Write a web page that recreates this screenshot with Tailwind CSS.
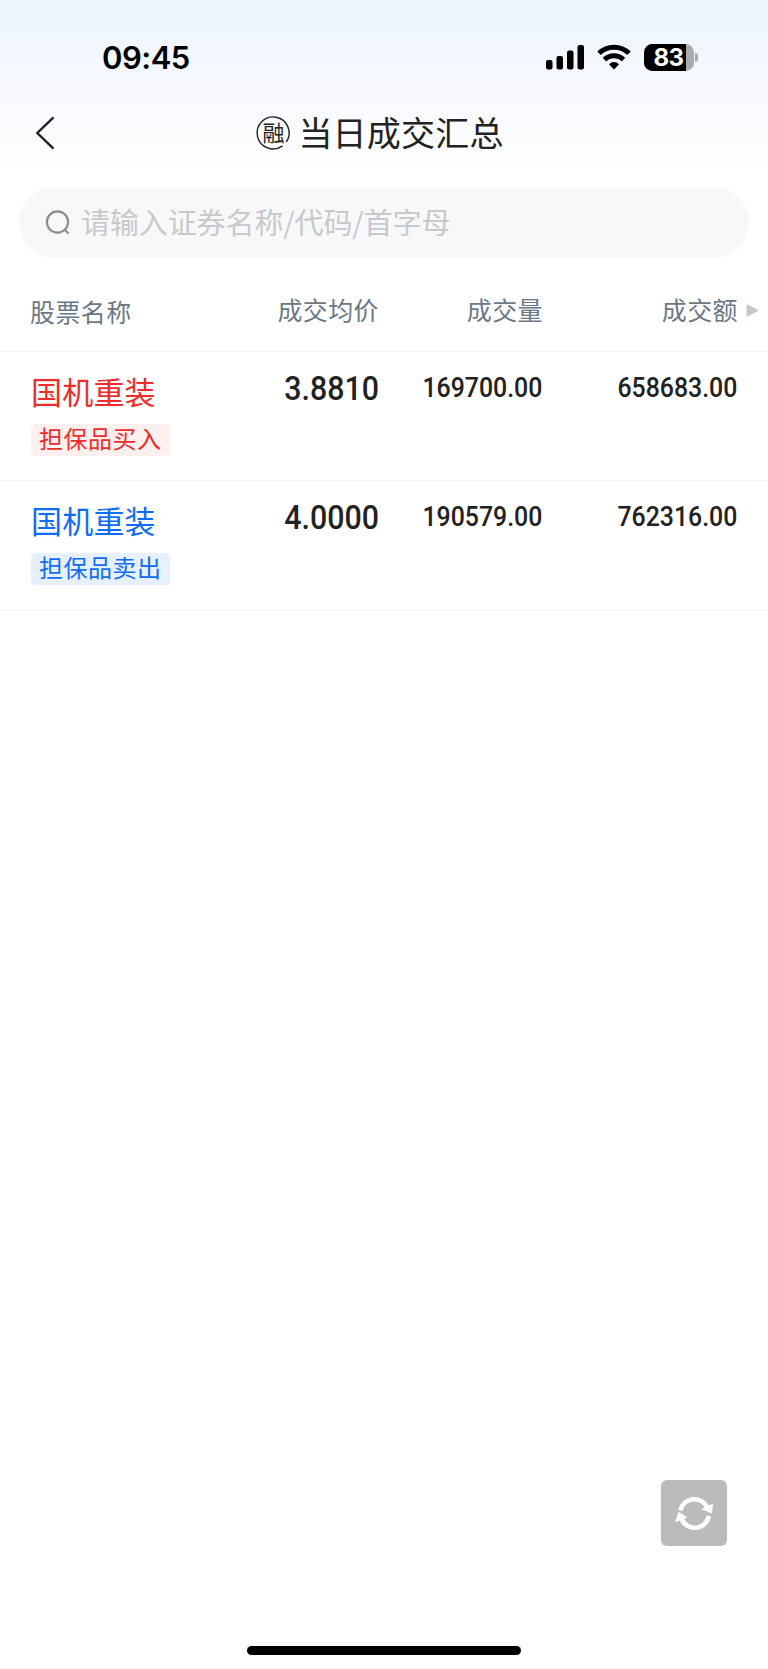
<!DOCTYPE html>
<html lang="zh-CN">
<head>
    <meta charset="UTF-8">
    <meta name="viewport" content="width=device-width, initial-scale=1.0">
    <title>当日成交汇总</title>
    <script src="https://cdn.jsdelivr.net/npm/@tailwindcss/browser@4"></script>
</head>
<body class="bg-white font-['Noto_Sans_CJK_SC',sans-serif] text-[#222]">
    <div class="relative w-[768px] h-[1669px] flex flex-col overflow-hidden">
        <div class="bg-linear-to-b from-[#ecf5fe] via-[#f5f8fe] via-40% to-white h-[175px] shrink-0">
            <!-- Status bar -->
            <div class="h-[94px] pt-[20px] pl-[102px] pr-[70px] flex items-center justify-between">
                <span class="font-['Inter',sans-serif] font-semibold text-[31px] leading-none tracking-[-0.5px] text-black">09:45</span>
                <div class="flex items-center">
                    <svg class="w-[38px] h-[26px] mr-[13px]" viewBox="0 0 38 26" fill="#000">
                        <rect x="0" y="16" width="6.5" height="9.5" rx="2"/>
                        <rect x="10.5" y="12" width="6.5" height="13.5" rx="2"/>
                        <rect x="21" y="6.5" width="6.5" height="19" rx="2"/>
                        <rect x="31.5" y="1" width="6.5" height="24.5" rx="2"/>
                    </svg>
                    <svg class="w-[34px] h-[26px] mr-[13px]" viewBox="0 0 34 26" fill="none" stroke="#000" stroke-width="5">
                        <path d="M2 9.3a21.5 21.5 0 0 1 30 0"/>
                        <path d="M7.5 15.6a13.6 13.6 0 0 1 19 0"/>
                        <path d="M17 25.4l-5-5.2a7 7 0 0 1 10 0z" fill="#000" stroke="none"/>
                    </svg>
                    <div class="relative flex w-[49.5px] h-[27px] rounded-[8.5px] overflow-hidden bg-[#a9abb0]">
                        <div class="w-[41.5px] bg-black"></div>
                        <span class="absolute left-[9.5px] top-0 font-['Inter',sans-serif] font-bold text-[24px] leading-[27px] tracking-[-0.6px] text-white">83</span>
                    </div>
                    <div class="w-[3px] h-[9px] ml-[1.5px] rounded-r-full bg-[#a9abb0]"></div>
                </div>
            </div>
            <!-- Title bar -->
            <div class="relative h-[78px] flex items-center justify-center">
                <svg class="absolute left-[35px] top-[22px] w-[20px] h-[34px]" viewBox="0 0 20 34" fill="none" stroke="#222" stroke-width="2.4">
                    <path d="M18.5 1.3L2.3 17l16.2 15.7"/>
                </svg>
                <svg class="w-[34px] h-[34px] mr-[8px] overflow-visible" viewBox="0 0 34 34">
                    <path d="M30.3 26A16 16 0 1 0 26.5 29.9" fill="none" stroke="#222" stroke-width="1.4"/>
                    <text x="17.5" y="25" text-anchor="middle" font-size="22" font-family="Noto Sans CJK SC" fill="#222">融</text>
                </svg>
                <h1 class="text-[34px] leading-[44px] tracking-[0.2px] mr-[8px] pb-[2px]">当日成交汇总</h1>
            </div>
        </div>

        <!-- Search -->
        <div class="mt-[12px] mx-[19px] h-[71px] shrink-0 rounded-full bg-[#f7f8fa] flex items-center pl-[26px]">
            <svg class="w-[26px] h-[26px] mr-[10px]" viewBox="0 0 26 26" fill="none" stroke="#8c8c8c" stroke-width="2.2">
                <circle cx="12.5" cy="12" r="10.6"/>
                <path d="M19.5 19.5l4 4"/>
            </svg>
            <span class="text-[29px] leading-[40px] tracking-[-0.1px] pb-[4px] text-[#c8c9cb]">请输入证券名称/代码/首字母</span>
        </div>

        <!-- Table header -->
        <div class="relative h-[94px] shrink-0 border-b border-[#f6f6f8] flex pt-[32px] text-[25px] leading-[38px] tracking-[0.4px] text-[#6b7885]">
            <div class="w-[200px] pl-[30px] pt-[2px]">股票名称</div>
            <div class="w-[179px] text-right">成交均价</div>
            <div class="w-[164px] text-right">成交量</div>
            <div class="w-[195px] text-right">成交额</div>
            <svg class="absolute left-[746px] top-[46px] w-[13px] h-[13px]" viewBox="0 0 13 13" fill="#c8c8c8">
                <path d="M1.5 .4l10.2 5.3q1 .8 0 1.6L1.5 12.6Q.5 12.6 .5 11.6V1.4Q.5.4 1.5.4z"/>
            </svg>
        </div>

        <!-- Rows -->
        <div class="h-[129px] shrink-0 border-b border-[#f6f6f8] flex pt-[18px]">
            <div class="w-[200px] pl-[31px] text-[#ee2c2c]">
                <div class="text-[31px] leading-[42px] tracking-[0.2px]">国机重装</div>
                <div class="mt-[12px] w-[139px] h-[32px] rounded-[4px] bg-[#fff0f0] pl-[8px] text-[24px] leading-[27px] tracking-[0.5px]">担保品买入</div>
            </div>
            <div class="w-[179px] pt-[1px] text-right font-['Roboto',sans-serif] font-medium text-[33px] leading-[36px]"><span class="inline-block origin-right scale-x-92">3.8810</span></div>
            <div class="w-[163px] pt-[1px] text-right font-['Roboto',sans-serif] font-medium text-[27px] leading-[34px]"><span class="inline-block origin-right scale-x-92">169700.00</span></div>
            <div class="w-[195px] pt-[1px] text-right font-['Roboto',sans-serif] font-medium text-[27px] leading-[34px]"><span class="inline-block origin-right scale-x-92">658683.00</span></div>
        </div>
        <div class="h-[130px] shrink-0 border-b border-[#f6f6f8] flex pt-[18px]">
            <div class="w-[200px] pl-[31px] text-[#0f6cf5]">
                <div class="text-[31px] leading-[42px] tracking-[0.2px]">国机重装</div>
                <div class="mt-[12px] w-[139px] h-[32px] rounded-[4px] bg-[#e7f0fe] pl-[8px] text-[24px] leading-[27px] tracking-[0.5px]">担保品卖出</div>
            </div>
            <div class="w-[179px] pt-[1px] text-right font-['Roboto',sans-serif] font-medium text-[33px] leading-[36px]"><span class="inline-block origin-right scale-x-92">4.0000</span></div>
            <div class="w-[163px] pt-[1px] text-right font-['Roboto',sans-serif] font-medium text-[27px] leading-[34px]"><span class="inline-block origin-right scale-x-92">190579.00</span></div>
            <div class="w-[195px] pt-[1px] text-right font-['Roboto',sans-serif] font-medium text-[27px] leading-[34px]"><span class="inline-block origin-right scale-x-92">762316.00</span></div>
        </div>

        <!-- Floating refresh button -->
        <button class="absolute left-[661px] top-[1480px] w-[66px] h-[66px] rounded-[6px] bg-[#bbb]">
            <svg class="w-[66px] h-[66px]" viewBox="0 0 66 66" fill="none" stroke="#fff" stroke-width="4.6">
                <path d="M19.3 30.5A14.3 14.3 0 0 1 46 27"/>
                <path d="M47.8 35.8A14.3 14.3 0 0 1 20.5 39"/>
                <path d="M52 23.5L51 33.5L40 29z" fill="#fff" stroke="none"/>
                <path d="M14.3 42.3L17.3 31.8L26.5 37.5z" fill="#fff" stroke="none"/>
            </svg>
        </button>

        <!-- Home indicator -->
        <div class="mt-auto mb-[14px] mx-auto w-[274px] h-[9px] rounded-full bg-black"></div>
    </div>
</body>
</html>
